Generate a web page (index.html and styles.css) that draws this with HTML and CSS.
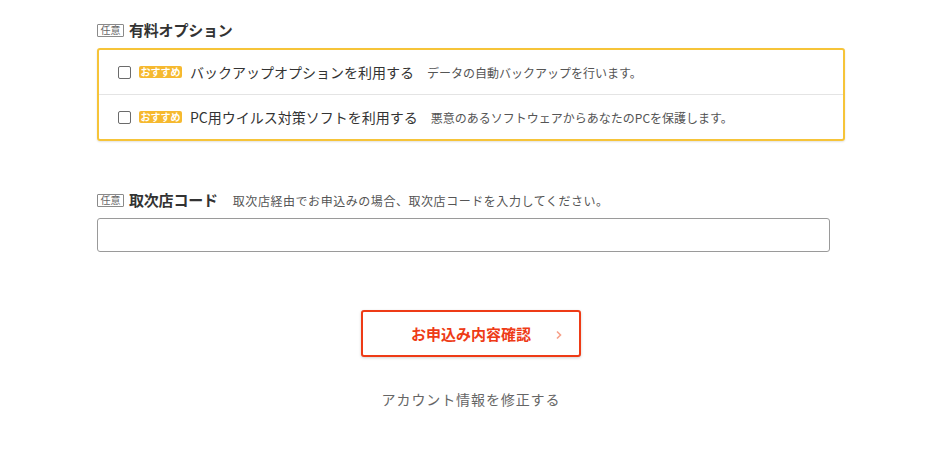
FILE: index.html
```html
<!DOCTYPE html>
<html lang="ja">
<head>
<meta charset="utf-8">
<link rel="stylesheet" href="styles.css">
</head>
<body>
<div class="page">
  <div class="heading">
    <span class="tag">任意</span>
    <span class="title">有料オプション</span>
  </div>
  <div class="options">
    <label class="option">
      <span class="check"></span>
      <span class="badge">おすすめ</span>
      <span class="label">バックアップオプションを利用する</span>
      <span class="desc">データの自動バックアップを行います。</span>
    </label>
    <label class="option">
      <span class="check"></span>
      <span class="badge">おすすめ</span>
      <span class="label">PC用ウイルス対策ソフトを利用する</span>
      <span class="desc">悪意のあるソフトウェアからあなたのPCを保護します。</span>
    </label>
  </div>

  <div class="heading heading2">
    <span class="tag">任意</span>
    <span class="title">取次店コード</span>
    <span class="note">取次店経由でお申込みの場合、取次店コードを入力してください。</span>
  </div>
  <div class="field"></div>

  <div class="actions">
    <button class="submit">
      <span class="submit-text">お申込み内容確認</span>
      <svg class="chev" width="6" height="10" viewBox="0 0 6 10"><polyline points="1,1.5 4.5,5 1,8.5" fill="none" stroke="#f7a089" stroke-width="1.6"/></svg>
    </button>
    <a class="back">アカウント情報を修正する</a>
  </div>
</div>
</body>
</html>
```

FILE: styles.css
```css
* { box-sizing: border-box; }
body {
  margin: 0;
  background: #fff;
  font-family: "Noto Sans CJK JP", "Noto Sans", sans-serif;
  color: #333;
}
.page {
  width: 748px;
  margin-left: 97px;
  padding-top: 20px;
}
.heading {
  display: flex;
  align-items: center;
  height: 20px;
}
.tag {
  display: inline-flex;
  align-items: center;
  justify-content: center;
  width: 27px;
  height: 13px;
  border: 1px solid #8a8a8a;
  border-radius: 1px;
  font-size: 10px;
  line-height: 1;
  color: #666;
  margin-right: 5px;
}
.title {
  font-size: 15px;
  font-weight: bold;
  color: #333;
  line-height: 20px;
  letter-spacing: -0.2px;
}
.note {
  font-size: 12px;
  color: #555;
  margin-left: 15px;
  letter-spacing: 0.55px;
}
.options {
  margin-top: 8px;
  border: 2px solid #f6c439;
  border-radius: 3px;
  box-shadow: 0 1px 2px rgba(0,0,0,0.12);
}
.option {
  display: flex;
  align-items: center;
  height: 44px;
  padding-left: 19px;
}
.option + .option {
  border-top: 1px solid #e4e4e4;
  height: 45px;
}
.check {
  width: 13px;
  height: 13px;
  border: 1px solid #6b6b6b;
  border-radius: 2px;
  background: #fff;
  margin-right: 8px;
  flex: none;
}
.badge {
  display: inline-flex;
  align-items: center;
  justify-content: center;
  width: 43px;
  height: 12px;
  background: #f6b92f;
  color: #fff;
  font-weight: bold;
  font-size: 10px;
  line-height: 1;
  border-radius: 2px;
  margin-right: 8px;
}
.label {
  font-size: 14px;
  color: #333;
}
.desc {
  font-size: 12px;
  color: #555;
  margin-left: 13px;
  letter-spacing: 0;
}
.heading2 {
  margin-top: 49px;
}
.field {
  width: 733px;
  height: 34px;
  margin-top: 8px;
  border: 1px solid #9a9a9a;
  border-radius: 3px;
  background: #fff;
}
.actions {
  display: flex;
  flex-direction: column;
  align-items: center;
  margin-top: 58px;
}
.submit {
  position: relative;
  width: 220px;
  height: 47px;
  border: 2px solid #ee3b16;
  border-radius: 3px;
  background: #fff;
  box-shadow: 0 1px 3px rgba(0,0,0,0.18);
  display: flex;
  align-items: center;
  justify-content: center;
  padding: 0;
  font-family: inherit;
}
.submit-text {
  font-size: 15px;
  font-weight: bold;
  color: #ee3b16;
}
.chev {
  position: absolute;
  right: 17px;
  top: 18px;
}
.back {
  margin-top: 32px;
  font-size: 14px;
  color: #666;
  letter-spacing: 0.9px;
  line-height: 20px;
}
```
